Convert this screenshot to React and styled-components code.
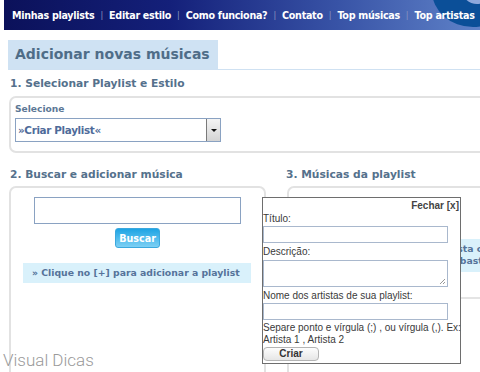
import React from "react";
import styled, { createGlobalStyle } from "styled-components";

const Global = createGlobalStyle`
  body {
    margin: 0;
    background: #fff;
    font-family: "DejaVu Sans", Verdana, sans-serif;
  }
`;

const Page = styled.div`
  position: relative;
  width: 480px;
  height: 372px;
  overflow: hidden;
  background: #fff;
`;

const TopBar = styled.div`
  position: relative;
  height: 30px;
  margin-left: 4px;
  display: flex;
  align-items: center;
  padding-left: 8px;
  overflow: hidden;
  background: linear-gradient(90deg, #0b115a 0%, #14207a 35%, #3853a6 70%, #5f82c8 100%);
`;

const Disc = styled.div`
  position: absolute;
  right: -34px;
  top: -45px;
  width: 82px;
  height: 72px;
  border-radius: 50%;
  background: #0b4f98;

  &::after {
    content: "";
    position: absolute;
    left: 30px;
    top: 21px;
    width: 30px;
    height: 28px;
    border-radius: 50%;
    background: #8ea8dc;
  }
`;

const NavItem = styled.a`
  position: relative;
  color: #fff;
  font-weight: bold;
  font-size: 9.6px;
  letter-spacing: -0.3px;
  text-decoration: none;
  white-space: nowrap;
`;

const NavSep = styled.span`
  color: #8c96c0;
  font-size: 8px;
  margin: 0 6px;
  position: relative;
`;

const Content = styled.div`
  padding: 10px 0 0 8px;
`;

const HeadingRow = styled.div`
  display: flex;
  border-bottom: 1px solid #cfe1f2;
`;

const Heading = styled.h1`
  margin: 0;
  width: 210px;
  height: 29px;
  box-sizing: border-box;
  padding: 6px 0 0 7px;
  background: #cfe2f3;
  color: #4f6d88;
  font-size: 14px;
  font-weight: bold;
  white-space: nowrap;
`;

const SectionTitle = styled.h2`
  margin: 0;
  padding: ${(p) => p.$pad || "7px 0 6px 2px"};
  color: #55718c;
  font-size: 10.7px;
  font-weight: bold;
  white-space: nowrap;
`;

const Box = styled.div`
  border: 2px solid #e2e2e2;
  border-radius: 7px;
  margin-left: 1px;
  margin-right: ${(p) => p.$mr || "0"};
  height: ${(p) => p.$h};
  box-sizing: border-box;
  padding: ${(p) => p.$pad || "0"};
  position: relative;
  overflow: hidden;
`;

const Label = styled.div`
  color: #5c7896;
  font-size: 9.1px;
  font-weight: bold;
  margin-bottom: 4px;
`;

const Select = styled.div`
  display: flex;
  width: 206px;
  height: 24px;
  box-sizing: border-box;
  border: 1px solid #8aa2c2;
  background: #fff;
`;

const SelectText = styled.div`
  flex: 1;
  color: #4f6b9a;
  font-size: 10.4px;
  letter-spacing: -0.35px;
  font-weight: bold;
  padding: 5px 0 0 2px;
  white-space: nowrap;
`;

const SelectButton = styled.div`
  width: 13px;
  border-left: 1px solid #7a7a7a;
  background: linear-gradient(#f4f4f4, #d4d4d4);
  display: flex;
  align-items: center;
  justify-content: center;
`;

const Arrow = styled.div`
  width: 0;
  height: 0;
  border-left: 3px solid transparent;
  border-right: 3px solid transparent;
  border-top: 3px solid #111;
`;

const Columns = styled.div`
  display: grid;
  grid-template-columns: 258px 1fr;
  column-gap: 20px;
  margin-top: 8px;
`;

const Column = styled.div`
  display: flex;
  flex-direction: column;
`;

const SearchArea = styled.div`
  display: flex;
  flex-direction: column;
  align-items: center;
  padding-top: 9px;
`;

const SearchInput = styled.div`
  width: 207px;
  height: 27px;
  box-sizing: border-box;
  border: 1px solid #8aa2c2;
`;

const SearchButton = styled.button`
  margin-top: 4px;
  width: 45px;
  height: 20px;
  border: 1px solid #3ba8de;
  border-radius: 3px;
  background: linear-gradient(#1ea4e4, #7dd0f4);
  color: #fff;
  font-family: "DejaVu Sans", Verdana, sans-serif;
  font-size: 9.6px;
  font-weight: bold;
  padding: 0;
`;

const HintBar = styled.div`
  margin: ${(p) => p.$m || "15px 0 0 12px"};
  width: ${(p) => p.$w || "228px"};
  height: ${(p) => p.$h || "20px"};
  box-sizing: border-box;
  padding: ${(p) => p.$pad || "4px 0 0 9px"};
  background: #d9f1fb;
  color: #55739a;
  font-size: 9.3px;
  font-weight: bold;
  white-space: nowrap;
  line-height: 12px;
`;

const Divider = styled.div`
  margin-top: 25px;
  border-top: 2px solid #e4e4e4;
`;

const Popup = styled.div`
  position: absolute;
  left: 262px;
  top: 197px;
  width: 199px;
  height: 167px;
  box-sizing: border-box;
  border: 1px solid #6e6e6e;
  background: #fff;
  padding: 1px 0 0 0;
  font-family: "Liberation Sans", Arial, sans-serif;
  color: #3a3a3a;
  font-size: 10px;
`;

const Close = styled.div`
  text-align: right;
  font-weight: bold;
  color: #444;
  padding-right: 1px;
  height: 13px;
  line-height: 13px;
`;

const FieldLabel = styled.div`
  margin-top: ${(p) => p.$mt || "0"};
  height: 13px;
  line-height: 13px;
`;

const Field = styled.div`
  width: 185px;
  height: ${(p) => p.$h || "17px"};
  box-sizing: border-box;
  border: 1px solid #a9b8cd;
  margin-top: ${(p) => p.$mt || "1px"};
  position: relative;
`;

const Grip = styled.svg`
  position: absolute;
  right: 1px;
  bottom: 1px;
`;

const Note = styled.div`
  margin-top: 2px;
  line-height: 12px;
  white-space: nowrap;
`;

const CreateButton = styled.button`
  display: block;
  margin-top: 1px;
  width: 56px;
  height: 14px;
  border: 1px solid #b4b4b4;
  border-radius: 4px;
  background: linear-gradient(#fdfdfd, #e6e6e6);
  font-family: "Liberation Sans", Arial, sans-serif;
  font-size: 10px;
  font-weight: bold;
  color: #333;
  padding: 0;
  line-height: 12px;
`;

const Watermark = styled.div`
  position: absolute;
  left: 3px;
  top: 350px;
  font-family: Roboto, "Liberation Sans", sans-serif;
  font-weight: 300;
  font-size: 17px;
  color: #9a9a9a;
`;

const navItems = ["Minhas playlists", "Editar estilo", "Como funciona?", "Contato", "Top músicas", "Top artistas"];

export default function App() {
  return (
    <Page>
      <Global />
      <TopBar>
        <Disc />
        {navItems.map((item, i) => (
          <React.Fragment key={item}>
            {i > 0 && <NavSep>|</NavSep>}
            <NavItem>{item}</NavItem>
          </React.Fragment>
        ))}
      </TopBar>
      <Content>
        <HeadingRow>
          <Heading>Adicionar novas músicas</Heading>
        </HeadingRow>
        <SectionTitle>1. Selecionar Playlist e Estilo</SectionTitle>
        <Box $h="57px" $mr="-10px" $pad="6px 0 0 4px">
          <Label>Selecione</Label>
          <Select>
            <SelectText>»Criar Playlist«</SelectText>
            <SelectButton>
              <Arrow />
            </SelectButton>
          </Select>
        </Box>
        <Columns>
          <Column>
            <SectionTitle $pad="7px 0 5px 2px">2. Buscar e adicionar música</SectionTitle>
            <Box $h="200px">
              <SearchArea>
                <SearchInput />
                <SearchButton>Buscar</SearchButton>
              </SearchArea>
              <HintBar>» Clique no [+] para adicionar a playlist</HintBar>
            </Box>
          </Column>
          <Column>
            <SectionTitle $pad="7px 0 5px 0">3. Músicas da playlist</SectionTitle>
            <Box $h="200px" $mr="-20px">
              <HintBar $m="51px 0 0 0" $w="240px" $h="33px" $pad="4px 0 0 16px">
                » Escolha ou crie uma nova lista clique
                <br />
                e no nome da minha playlist, basta
              </HintBar>
              <Divider />
            </Box>
          </Column>
        </Columns>
      </Content>
      <Popup>
        <Close>Fechar [x]</Close>
        <FieldLabel>Título:</FieldLabel>
        <Field />
        <FieldLabel $mt="2px">Descrição:</FieldLabel>
        <Field $h="27px" $mt="2px">
          <Grip width="7" height="7" viewBox="0 0 7 7">
            <path d="M6 1L1 6M6 4L4 6" stroke="#999" strokeWidth="1" />
          </Grip>
        </Field>
        <FieldLabel $mt="2px">Nome dos artistas de sua playlist:</FieldLabel>
        <Field />
        <Note>
          Separe ponto e vírgula (;) , ou vírgula (,). Ex:
          <br />
          Artista 1 , Artista 2
        </Note>
        <CreateButton>Criar</CreateButton>
      </Popup>
      <Watermark>Visual Dicas</Watermark>
    </Page>
  );
}
